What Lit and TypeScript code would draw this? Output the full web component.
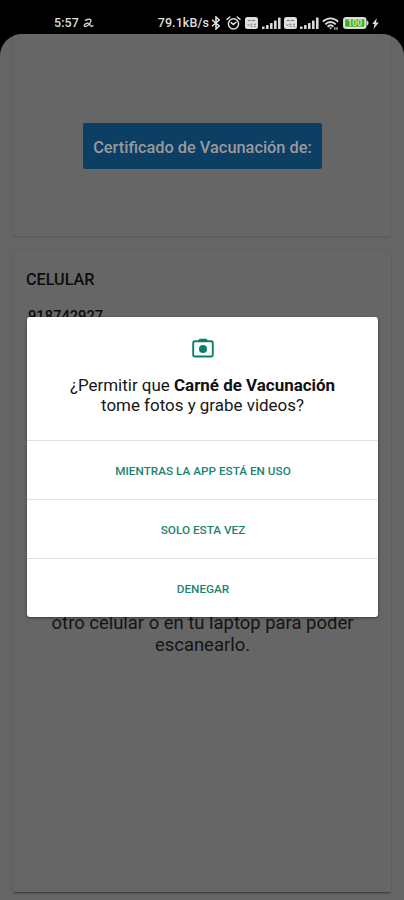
import { LitElement, html, svg, css } from "lit";
import { customElement, property } from "lit/decorators.js";

@customElement("status-bar")
class StatusBar extends LitElement {
  static styles = css`
    :host {
      display: flex;
      justify-content: space-between;
      box-sizing: border-box;
      height: 34px;
      padding: 12px 25px 0 54px;
      background: #000;
      color: #dedede;
      font: 500 12.5px/22px Roboto, sans-serif;
    }
    .group { display: flex; align-items: center; height: 22px; }
    .time { letter-spacing: 0.1px; }
    .left { gap: 4px; }
    .right { gap: 4px; }
    .speed { letter-spacing: 0.1px; margin-right: -2px; white-space: nowrap; }
    svg { display: block; flex: none; }
    .alarm { margin-left: 1px; }
    .tight { margin-left: -1px; }
    .near { margin-left: -1px; }
  `;

  private sim() {
    return html`<svg width="13" height="12" viewBox="0 0 13 12">
      <rect width="13" height="12" rx="2.5" fill="#dedede" />
      <path d="M3 3.5h2.500M6.500 3.500H10M2.500 8h2M5.500 7.200h2M5.500 9.200h2M9 7.200h1.800M9 9.200h1.800" stroke="#777" stroke-width="1.1" />
    </svg>`;
  }

  private signal() {
    const bars = [2.5, 4, 6, 8.5, 11.5];
    return html`<svg width="19" height="12" viewBox="0 0 19 12">
      ${bars.map((h, i) => svg`<rect x=${i * 4} y=${12 - h} width="2.6" height=${h} rx="0.6" fill="#d8d8d8" />`)}
    </svg>`;
  }

  render() {
    return html`
      <div class="group left">
        <span class="time">5:57</span>
        <svg width="11" height="10" viewBox="0 0 11 10" fill="none" stroke="#ccc" stroke-width="1.4" stroke-linecap="round">
          <path d="M2.500 2.400C4.500.8 8 .8 8 2.600 8 4.500 5.500 7.600 3 8.400.8 8.900.6 6.800 2.400 5.800 4.400 4.700 6.300 5.200 7 7c.5 1.400 1.800 1.700 3 .8" />
        </svg>
      </div>
      <div class="group right">
        <span class="speed">79.1kB/s</span>
        <svg width="10" height="14" viewBox="0 0 10 14" fill="none" stroke="#e4e4e4" stroke-width="1.5">
          <path d="M1 3.800 8.200 10 5 13V1l3.200 3L1 10.200" />
        </svg>
        <svg class="alarm" width="15" height="14" viewBox="0 0 15 14" fill="none" stroke="#dedede" stroke-width="1.5" stroke-linecap="round">
          <circle cx="7.500" cy="7.800" r="5.100" />
          <path d="M1 3.300 3.800 1M14 3.300 11.200 1M5.200 6.600l2.200 2 2.600-2.400" />
        </svg>
        ${this.sim()}
        ${this.signal()}
        <span class="tight">${this.sim()}</span>
        <span class="tight">${this.signal()}</span>
        <svg class="near" width="17" height="13" viewBox="0 0 17 13" fill="none" stroke="#dcdcdc" stroke-width="1.9">
          <path d="M.8 4.700c4.500-4.500 10.900-4.500 15.400 0M3.300 7.300c3-3 7.400-3 10.400 0M5.600 9.700c1.700-1.600 4.100-1.600 5.800 0" />
          <path d="M7 10.500h3L8.500 12.500z" fill="#dcdcdc" stroke="none" />
          <path d="M12.800 10.200v2.600M15 10.200v2.600" stroke-width="1.200" />
        </svg>
        <svg width="26" height="12" viewBox="0 0 26 12">
          <rect x=".8" y=".8" width="22" height="10.400" rx="2.500" fill="#e8efe4" stroke="#d5dccf" stroke-width="1.600" />
          <rect x="2.200" y="2.200" width="19.200" height="7.600" rx="1" fill="#43a821" />
          <path d="M23.800 3.500c2.300.5 2.300 4.500 0 5z" fill="#d5dccf" />
          <text x="11.800" y="9" text-anchor="middle" font-family="Roboto, sans-serif" font-size="8.500" font-weight="700" fill="#c9eebc">100</text>
        </svg>
        <svg class="near" width="7" height="11" viewBox="0 0 7 11"><path d="M4.800 0 .3 6h2.300L1.500 11 6.800 4.500H4z" fill="#dedede" /></svg>
      </div>
    `;
  }
}

@customElement("permission-dialog")
class PermissionDialog extends LitElement {
  @property() app = "";
  @property({ attribute: false }) actions: string[] = [];

  static styles = css`
    :host {
      display: flex;
      flex-direction: column;
      box-sizing: border-box;
      height: 300px;
      background: #fff;
      border-radius: 3px;
      box-shadow: 0 1px 3px rgba(0, 0, 0, 0.45);
      overflow: hidden;
      font-family: Roboto, sans-serif;
    }
    .head {
      display: flex;
      flex-direction: column;
      align-items: center;
      box-sizing: border-box;
      height: 123px;
      padding-top: 21px;
    }
    .message {
      margin-top: 17px;
      color: #161616;
      font-size: 16.95px;
      line-height: 20px;
      text-align: center;
      white-space: nowrap;
    }
    b { font-weight: 700; color: #111; }
    .action {
      display: flex;
      flex: 1;
      align-items: center;
      justify-content: center;
      border: 0;
      border-top: 1px solid #e2e2e2;
      background: none;
      padding: 2px 0 0 1px;
      color: #1c8570;
      font: 500 11.75px/16px Roboto, sans-serif;
    }
  `;

  render() {
    return html`
      <div class="head">
        <svg width="22" height="20" viewBox="0 0 22 20">
          <path d="M7.300.8h7.400L16.200 3.500H5.800z" fill="#0b8069" />
          <rect x="1.200" y="3.200" width="19.600" height="15.300" rx="1.500" fill="none" stroke="#0b8069" stroke-width="1.900" />
          <circle cx="11" cy="10.900" r="4" fill="#0b8069" />
        </svg>
        <div class="message">¿Permitir que <b>${this.app}</b><br />tome fotos y grabe videos?</div>
      </div>
      ${this.actions.map((a) => html`<button class="action">${a}</button>`)}
    `;
  }
}

@customElement("app-root")
class AppRoot extends LitElement {
  static styles = css`
    :host {
      display: block;
      position: relative;
      width: 404px;
      height: 900px;
      overflow: hidden;
      background: #000;
      font-family: Roboto, sans-serif;
    }
    .screen {
      display: flex;
      flex-direction: column;
      gap: 16px;
      box-sizing: border-box;
      height: 866px;
      padding: 0 13px 8px;
      border-radius: 22px 22px 0 0;
      background: #656565;
      overflow: hidden;
    }
    .card {
      box-sizing: border-box;
      border-radius: 2px;
      background: #666;
      box-shadow: 0 1px 2px rgba(0, 0, 0, 0.16);
    }
    .title-card {
      display: flex;
      align-items: flex-end;
      justify-content: center;
      height: 202px;
      padding: 0 0 67px 1px;
    }
    .title {
      box-sizing: border-box;
      width: 239px;
      height: 46px;
      border-radius: 2px;
      background: #0d3e64;
      color: #9a9a9a;
      font-size: 16.35px;
      font-weight: 500;
      line-height: 49px;
      text-align: center;
      white-space: nowrap;
    }
    .details {
      display: flex;
      flex-direction: column;
      flex: 1;
      padding: 18px 13px 0;
      color: #0c0c0c;
      box-shadow: 0 2px 2px -1px rgba(0, 0, 0, 0.45), 0 0 2px rgba(0, 0, 0, 0.12);
    }
    .label { font-size: 16.2px; font-weight: 500; line-height: 20px; }
    .phone { margin: 16px 0 0 2px; font-size: 14.7px; font-weight: 500; line-height: 20px; }
    .hint {
      margin: 286px 0 0 1px;
      font-size: 18.45px;
      line-height: 22px;
      text-align: center;
      white-space: nowrap;
      color: #141414;
    }
    permission-dialog { position: absolute; top: 317px; left: 27px; width: 351px; }
  `;

  render() {
    return html`
      <status-bar></status-bar>
      <main class="screen">
        <section class="card title-card"><div class="title">Certificado de Vacunación de:</div></section>
        <section class="card details">
          <div class="label">CELULAR</div>
          <div class="phone">918742927</div>
          <div class="hint">otro celular o en tu laptop para poder<br />escanearlo.</div>
        </section>
      </main>
      <permission-dialog
        app="Carné de Vacunación"
        .actions=${["MIENTRAS LA APP ESTÁ EN USO", "SOLO ESTA VEZ", "DENEGAR"]}
      ></permission-dialog>
    `;
  }
}
